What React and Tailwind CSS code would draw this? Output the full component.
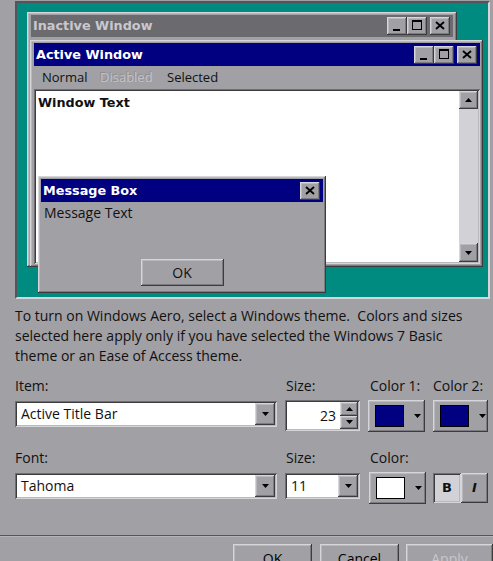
import React from 'react'

const raised =
  'shadow-[inset_-1px_-1px_0_#3c3c3f,inset_1px_1px_0_#d6d6da,inset_-2px_-2px_0_#7c7b80,inset_2px_2px_0_#b9b8bd]'
const sunken =
  'shadow-[inset_1px_1px_0_#6f6e73,inset_-1px_-1px_0_#d6d6da,inset_2px_2px_0_#3c3c3f,inset_-2px_-2px_0_#b9b8bd]'

function Tri({ up }) {
  return (
    <svg width="7" height="4" viewBox="0 0 7 4">
      <polygon points={up ? '0,4 7,4 3.5,0' : '0,0 7,0 3.5,4'} fill="#000" />
    </svg>
  )
}

function CapButton({ kind }) {
  return (
    <div className={`w-[20px] h-[18px] bg-[#a1a0a5] ${raised}`}>
      <svg width="20" height="18" viewBox="0 0 20 18">
        {kind === 'min' && <rect x="6" y="12" width="7" height="2" fill="#000" />}
        {kind === 'max' && (
          <g>
            <rect x="5.5" y="3.5" width="9" height="9" fill="none" stroke="#000" />
            <rect x="5" y="3" width="10" height="2" fill="#000" />
          </g>
        )}
        {kind === 'close' && (
          <g stroke="#000" strokeWidth="1.8">
            <line x1="6" y1="5" x2="14" y2="12" />
            <line x1="14" y1="5" x2="6" y2="12" />
          </g>
        )}
      </svg>
    </div>
  )
}

function Caption({ title, bg, fg, h, close }) {
  return (
    <div className={`flex items-center justify-between pl-[2px] pr-[3px] ${bg} ${h}`}>
      <span className={`font-['DejaVu_Sans',sans-serif] font-bold text-[12.8px] ${fg}`}>{title}</span>
      {close ? (
        <CapButton kind="close" />
      ) : (
        <div className="flex">
          <CapButton kind="min" />
          <CapButton kind="max" />
          <div className="ml-[3px]">
            <CapButton kind="close" />
          </div>
        </div>
      )}
    </div>
  )
}

function Dropdown({ w, text, pad = 'pl-[4px]' }) {
  return (
    <div className={`${w} h-[26px] bg-white flex p-[2px] ${sunken}`}>
      <div className={`flex-1 flex items-center ${pad} leading-none`}>{text}</div>
      <div className={`w-[20px] h-full bg-[#a1a0a5] flex items-center justify-center ${raised}`}>
        <Tri />
      </div>
    </div>
  )
}

function ColorButton({ w, color }) {
  return (
    <div className={`${w} h-[32px] bg-[#a1a0a5] flex items-center pl-[7px] gap-[10px] ${raised}`}>
      <div className="w-[29px] h-[22px] border border-black" style={{ background: color }} />
      <Tri />
    </div>
  )
}

function Btn({ label, disabled }) {
  return (
    <div
      className={`w-[87px] h-[28px] bg-[#a1a0a5] flex items-center justify-center ${raised} ${
        disabled ? 'text-[#c8c7cc]' : 'text-black'
      }`}
    >
      {label}
    </div>
  )
}

export default function App() {
  return (
    <div className="w-[493px] h-[561px] bg-[#a1a0a5] overflow-hidden font-['Open_Sans',sans-serif] text-[14px] text-[#111]">
      {/* preview */}
      <div className="ml-[15px] mt-[1px] w-[475px] h-[298px] border-2 border-t-[#55545a] border-l-[#55545a] border-b-[#d6d6da] border-r-[#d6d6da] bg-[#008b80] relative">
        {/* inactive */}
        <div className={`absolute left-[10px] top-[9px] w-[430px] h-[255px] bg-[#a1a0a5] pt-[3px] px-[4px] ${raised}`}>
          <Caption title="Inactive Window" bg="bg-[#6b6a6f]" fg="text-[#c9c8cd]" h="h-[22px]" />
        </div>

        {/* active */}
        <div className={`absolute left-[13px] top-[37px] w-[453px] h-[227px] bg-[#a1a0a5] pt-[3px] pl-[4px] pr-[3px] pb-[3px] flex flex-col ${raised}`}>
          <Caption title="Active Window" bg="bg-[#000080]" fg="text-white" h="h-[23px]" />
          <div className="h-[23px] flex items-center pl-[8px] text-[13px]">
            <span className="w-[58px]">Normal</span>
            <span className="w-[67px] text-[#c3c2c7] [text-shadow:-1px_-1px_0_#8d8c91]">Disabled</span>
            <span>Selected</span>
          </div>
          <div className={`flex-1 flex p-[2px] bg-white ${sunken}`}>
            <div className="flex-1 pl-[2px] pt-[2px] font-['DejaVu_Sans',sans-serif] font-bold text-[12.8px]">
              Window Text
            </div>
            <div className="w-[19px] bg-[#d2d1d6] flex flex-col justify-between">
              <div className={`h-[18px] bg-[#a1a0a5] flex items-center justify-center ${raised}`}>
                <Tri up />
              </div>
              <div className={`h-[19px] bg-[#a1a0a5] flex items-center justify-center ${raised}`}>
                <Tri />
              </div>
            </div>
          </div>
        </div>

        {/* message box */}
        <div className={`absolute left-[21px] top-[173px] w-[288px] h-[117px] bg-[#a1a0a5] p-[3px] flex flex-col ${raised}`}>
          <Caption title="Message Box" bg="bg-[#000080]" fg="text-white" h="h-[23px]" close />
          <div className="pl-[3px] pt-[1px] leading-[20px]">Message Text</div>
          <div className="flex-1 flex items-end justify-center pb-[4px]">
            <div className={`w-[83px] h-[27px] bg-[#a1a0a5] flex items-center justify-center ${raised}`}>OK</div>
          </div>
        </div>
      </div>

      <p className="mt-[7px] px-[15px] leading-[20px] whitespace-nowrap">
        To turn on Windows Aero, select a Windows theme.&nbsp; Colors and sizes
        <br />
        selected here apply only if you have selected the Windows 7 Basic
        <br />
        theme or an Ease of Access theme.
      </p>

      {/* item row */}
      <div className="mt-[10px] pl-[15px] flex">
        <div className="w-[270px]">
          <div className="leading-[20px]">Item:</div>
          <div className="mt-[5px]">
            <Dropdown w="w-[262px]" text="Active Title Bar" />
          </div>
        </div>
        <div className="w-[83px]">
          <div className="leading-[20px] pl-[1px]">Size:</div>
          <div className={`mt-[4px] w-[75px] h-[31px] bg-white flex p-[2px] ${sunken}`}>
            <div className="flex-1 flex items-center justify-end pr-[4px]">23</div>
            <div className="w-[18px] flex flex-col">
              <div className={`flex-1 bg-[#a1a0a5] flex items-center justify-center ${raised}`}>
                <Tri up />
              </div>
              <div className={`flex-1 bg-[#a1a0a5] flex items-center justify-center ${raised}`}>
                <Tri />
              </div>
            </div>
          </div>
        </div>
        <div className="w-[65px]">
          <div className="leading-[20px] pl-[2px]">Color 1:</div>
          <div className="mt-[4px]">
            <ColorButton w="w-[57px]" color="#000080" />
          </div>
        </div>
        <div>
          <div className="leading-[20px]">Color 2:</div>
          <div className="mt-[4px]">
            <ColorButton w="w-[55px]" color="#000080" />
          </div>
        </div>
      </div>

      {/* font row */}
      <div className="mt-[16px] pl-[15px] flex">
        <div className="w-[270px]">
          <div className="leading-[20px]">Font:</div>
          <div className="mt-[5px]">
            <Dropdown w="w-[262px]" text="Tahoma" />
          </div>
        </div>
        <div className="w-[84px]">
          <div className="leading-[20px] pl-[1px]">Size:</div>
          <div className="mt-[5px]">
            <Dropdown w="w-[75px]" text="11" />
          </div>
        </div>
        <div className="w-[64px]">
          <div className="leading-[20px] pl-[1px]">Color:</div>
          <div className="mt-[4px]">
            <ColorButton w="w-[57px]" color="#ffffff" />
          </div>
        </div>
        <div className="pt-[25px] flex">
          <div className={`w-[28px] h-[30px] bg-[#d2d1d6] flex items-center justify-center font-['DejaVu_Sans',sans-serif] font-bold text-[13px] ${sunken}`}>
            B
          </div>
          <div className={`w-[27px] h-[30px] bg-[#a1a0a5] flex items-center justify-center font-['DejaVu_Sans',sans-serif] italic font-bold text-[13px] ${raised}`}>
            I
          </div>
        </div>
      </div>

      <div className="mt-[31px] h-px bg-[#55545a]" />
      <div className="h-px bg-[#b4b3b8]" />

      <div className="mt-[7px] pl-[233px] flex gap-[8px]">
        <Btn label="OK" />
        <Btn label="Cancel" />
        <div className="-ml-[1px]">
          <Btn label="Apply" disabled />
        </div>
      </div>
    </div>
  )
}
